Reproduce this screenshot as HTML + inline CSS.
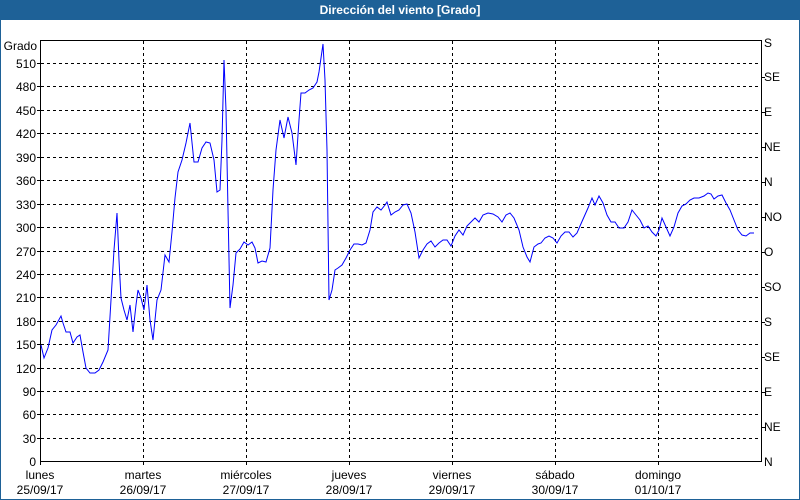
<!DOCTYPE html>
<html><head><meta charset="utf-8"><style>
html,body{margin:0;padding:0;background:#fff;}
svg{display:block;font-family:"Liberation Sans",sans-serif;}
</style></head><body>
<svg width="800" height="500" viewBox="0 0 800 500" xmlns="http://www.w3.org/2000/svg">
<rect x="0" y="0" width="800" height="500" fill="#fff"/>
<rect x="0" y="0" width="800" height="20" fill="#1e6197"/>
<rect x="0.5" y="0.5" width="799" height="499" fill="none" stroke="#1e6197"/>
<text x="400" y="14" text-anchor="middle" fill="#fff" font-size="12" font-weight="bold">Dirección del viento [Grado]</text>
<g stroke="#000" stroke-dasharray="3,3" stroke-width="1">
<path d="M41 63.5H760M41 86.5H760M41 110.5H760M41 133.5H760M41 157.5H760M41 180.5H760M41 204.5H760M41 227.5H760M41 251.5H760M41 274.5H760M41 297.5H760M41 321.5H760M41 344.5H760M41 368.5H760M41 391.5H760M41 414.5H760M41 438.5H760"/>
<path d="M143.5 41V461M246.5 41V461M349.5 41V461M452.5 41V461M555.5 41V461M658.5 41V461"/>
</g>
<g stroke="#000" stroke-width="1" fill="none">
<path d="M40.5 40V465M40 461.5H761M761.5 40V462M40 40.5H762"/>
<path d="M37 63.5h4M37 86.5h4M37 110.5h4M37 133.5h4M37 157.5h4M37 180.5h4M37 204.5h4M37 227.5h4M37 251.5h4M37 274.5h4M37 297.5h4M37 321.5h4M37 344.5h4M37 368.5h4M37 391.5h4M37 414.5h4M37 438.5h4"/>
<path d="M761 77.5h4M761 112.5h4M761 147.5h4M761 182.5h4M761 217.5h4M761 252.5h4M761 287.5h4M761 322.5h4M761 357.5h4M761 392.5h4M761 427.5h4"/>
<path d="M143.5 461v4M246.5 461v4M349.5 461v4M452.5 461v4M555.5 461v4M658.5 461v4"/>
</g>
<g font-size="12" fill="#000" text-anchor="end">
<text x="37" y="50">Grado</text>
<text x="36" y="68">510</text><text x="36" y="91">480</text><text x="36" y="115">450</text><text x="36" y="138">420</text><text x="36" y="162">390</text><text x="36" y="185">360</text><text x="36" y="209">330</text><text x="36" y="232">300</text><text x="36" y="256">270</text><text x="36" y="279">240</text><text x="36" y="302">210</text><text x="36" y="326">180</text><text x="36" y="349">150</text><text x="36" y="373">120</text><text x="36" y="396">90</text><text x="36" y="419">60</text><text x="36" y="443">30</text><text x="36" y="466">0</text>
</g>
<g font-size="12" fill="#000">
<text x="764" y="47">S</text><text x="764" y="81">SE</text><text x="764" y="116">E</text><text x="764" y="151">NE</text><text x="764" y="186">N</text><text x="764" y="221">NO</text><text x="764" y="256">O</text><text x="764" y="291">SO</text><text x="764" y="326">S</text><text x="764" y="361">SE</text><text x="764" y="396">E</text><text x="764" y="431">NE</text><text x="764" y="466">N</text>
</g>
<g font-size="12" fill="#000" text-anchor="middle">
<text x="40" y="479">lunes</text><text x="40" y="494">25/09/17</text>
<text x="143" y="479">martes</text><text x="143" y="494">26/09/17</text>
<text x="246" y="479">miércoles</text><text x="246" y="494">27/09/17</text>
<text x="349" y="479">jueves</text><text x="349" y="494">28/09/17</text>
<text x="452" y="479">viernes</text><text x="452" y="494">29/09/17</text>
<text x="555" y="479">sábado</text><text x="555" y="494">30/09/17</text>
<text x="658" y="479">domingo</text><text x="658" y="494">01/10/17</text>
</g>
<polyline fill="none" stroke="#0000ff" stroke-width="1" points="41,345 44,358 48,348 52,330 56,325 61,316 63,323 66,332 70,332 73,343 77,337 80,335 83,352 86,368 90,373 95,373 99,370 103,362 108,350 111,300 114,250 117,213 119,260 121,298 124,310 127,320 130,305 133,332 136,305 138,290 141,298 144,310 147,285 150,320 153,340 157,300 161,290 165,255 169,262 172,232 175,198 178,172 182,160 186,143 190,123 194,162 198,162 202,148 206,142 210,143 214,160 217,192 220,190 222,140 224,60 226,110 228,210 230,308 233,285 236,253 240,249 244,242 248,245 252,242 255,248 258,263 262,261 266,262 270,248 273,190 276,150 280,120 284,138 288,117 292,133 296,165 299,120 301,93 305,93 309,90 313,88 317,82 319,72 321,58 323,44 325,80 327,150 329,300 332,290 335,270 338,268 342,265 346,258 350,250 354,244 358,244 362,245 366,243 370,230 373,212 377,207 381,210 385,205 387,202 391,215 395,212 399,210 403,205 407,204 411,213 415,232 419,258 423,250 427,244 431,241 435,247 439,243 443,240 447,240 451,246 455,236 459,230 463,235 467,226 471,222 475,218 479,222 483,215 488,213 493,214 498,217 502,222 506,215 510,213 514,218 519,230 523,247 527,257 530,262 534,247 538,244 541,243 545,238 549,236 553,238 557,243 561,236 565,232 569,232 573,237 577,233 580,226 584,217 588,208 592,198 595,205 599,196 603,203 607,215 611,222 615,222 619,228 624,228 628,222 632,210 636,215 640,220 644,228 648,226 652,232 656,236 659,230 662,218 666,227 670,236 674,227 678,213 682,206 686,204 690,200 694,198 699,198 704,196 708,193 711,194 714,199 718,196 722,195 726,203 730,210 734,220 738,230 742,235 746,236 750,233 754,233"/>
</svg>
</body></html>
